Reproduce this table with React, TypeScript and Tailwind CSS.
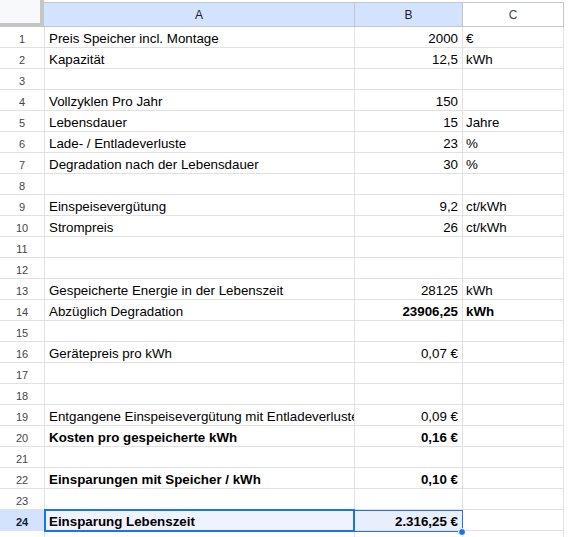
import React from "react";

type Row = {
  a?: string;
  b?: string;
  c?: string;
  boldA?: boolean;
  boldB?: boolean;
  boldC?: boolean;
};

const rows: Row[] = [
  { a: "Preis Speicher incl. Montage", b: "2000", c: "€" },
  { a: "Kapazität", b: "12,5", c: "kWh" },
  {},
  { a: "Vollzyklen Pro Jahr", b: "150" },
  { a: "Lebensdauer", b: "15", c: "Jahre" },
  { a: "Lade- / Entladeverluste", b: "23", c: "%" },
  { a: "Degradation nach der Lebensdauer", b: "30", c: "%" },
  {},
  { a: "Einspeisevergütung", b: "9,2", c: "ct/kWh" },
  { a: "Strompreis", b: "26", c: "ct/kWh" },
  {},
  {},
  { a: "Gespeicherte Energie in der Lebenszeit", b: "28125", c: "kWh" },
  { a: "Abzüglich Degradation", b: "23906,25", c: "kWh", boldB: true, boldC: true },
  {},
  { a: "Gerätepreis pro kWh", b: "0,07 €" },
  {},
  {},
  { a: "Entgangene Einspeisevergütung mit Entladeverluste", b: "0,09 €" },
  { a: "Kosten pro gespeicherte kWh", b: "0,16 €", boldA: true, boldB: true },
  {},
  { a: "Einsparungen mit Speicher / kWh", b: "0,10 €", boldA: true, boldB: true },
  {},
  { a: "Einsparung Lebenszeit", b: "2.316,25 €", boldA: true, boldB: true },
];

export default function App() {
  return (
    <div
      className="relative w-[568px] h-[537px] overflow-hidden bg-white text-black text-[13.33px]"
      style={{ fontFamily: '"Liberation Sans", Arial, sans-serif' }}
    >
      {/* Column headers */}
      <div className="flex h-[27px]">
        <div className="w-[44px] h-[27px] bg-[#f8f9fa] border-r-4 border-b-4 border-[#c4c7c5]" />
        <div className="w-[311px] flex flex-col">
          <div className="h-[3px] bg-white border-b border-[#c4c7c5]" />
          <div className="flex-1 bg-[#d3e3fd] border-r border-b border-[#c4c7c5] flex items-center justify-center text-[12px] text-[#1f1f1f]">
            A
          </div>
        </div>
        <div className="w-[108px] flex flex-col">
          <div className="h-[3px] bg-white border-b border-[#c4c7c5]" />
          <div className="flex-1 bg-[#d3e3fd] border-r border-b border-[#c4c7c5] flex items-center justify-center text-[12px] text-[#1f1f1f]">
            B
          </div>
        </div>
        <div className="w-[101px] flex flex-col">
          <div className="h-[3px] bg-white border-b border-[#c4c7c5]" />
          <div className="flex-1 bg-white border-r border-b border-[#c4c7c5] flex items-center justify-center text-[12px] text-[#444746]">
            C
          </div>
        </div>
      </div>

      {/* Rows */}
      {rows.map((r, i) => {
        const n = i + 1;
        const selected = n === 24;
        return (
          <div key={n} className="flex h-[21px]">
            <div
              className={`w-[45px] pt-[4px] border-r border-b border-[#e1e1e1] flex items-center justify-center text-[11px] ${
                selected ? "bg-[#d3e3fd] text-[#0b1e3f] font-bold" : "text-[#444746]"
              }`}
            >
              {n}
            </div>
            <div
              className={`w-[310px] pt-[4px] border-r border-b border-[#e1e1e1] flex items-center pl-[4px] whitespace-nowrap overflow-hidden ${
                r.boldA ? "font-bold" : ""
              } ${selected ? "bg-[#eef3fd]" : ""}`}
            >
              {r.a}
            </div>
            <div
              className={`w-[108px] pt-[4px] border-r border-b border-[#e1e1e1] flex items-center justify-end pr-[4px] whitespace-nowrap ${
                r.boldB ? "font-bold" : ""
              } ${selected ? "bg-[#e8eefc]" : ""}`}
            >
              {r.b}
            </div>
            <div
              className={`w-[101px] pt-[4px] border-r border-b border-[#e1e1e1] flex items-center pl-[3px] whitespace-nowrap ${
                r.boldC ? "font-bold" : ""
              }`}
            >
              {r.c}
            </div>
          </div>
        );
      })}

      {/* Partial row 25 */}
      <div className="flex h-[21px]">
        <div className="w-[45px] border-r border-[#e1e1e1]" />
        <div className="w-[310px] border-r border-[#e1e1e1]" />
        <div className="w-[108px] border-r border-[#e1e1e1]" />
        <div className="w-[101px] border-r border-[#e1e1e1]" />
      </div>

      {/* Selection overlay A24:B24 */}
      <div className="absolute left-[44px] top-[509px] w-[311px] h-[23px] border-2 border-[#1a73e8] pointer-events-none" />
      <div className="absolute left-[354px] top-[510px] w-[109px] h-[22px] border border-[#1a73e8] pointer-events-none" />
      <div className="absolute left-[458px] top-[528px] w-[8px] h-[8px] rounded-full bg-[#1a73e8] border border-white" />
    </div>
  );
}
